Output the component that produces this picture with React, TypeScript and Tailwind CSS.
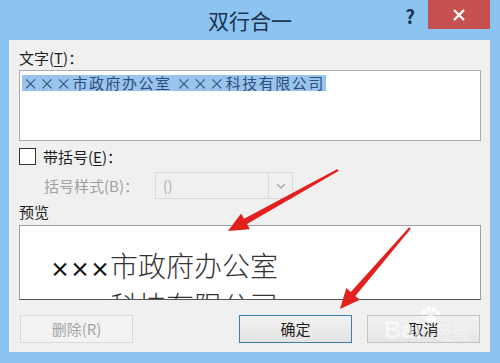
import React from 'react'

const ui = { fontFamily: '"Noto Sans CJK SC", "Liberation Sans", sans-serif' }

const Button = ({ label, kind }: { label: string; kind: 'disabled' | 'default' | 'normal' }) => {
  const cls =
    kind === 'disabled'
      ? 'border-[#d9d9d9] bg-[#f3f3f3] text-[#a3a3a3]'
      : kind === 'default'
        ? 'border-[#3c7fb1] bg-gradient-to-b from-[#f2f2f2] to-[#e3e3e3] text-[#1e1e1e]'
        : 'border-[#c4c4c4] bg-gradient-to-b from-[#f2f2f2] to-[#e6e6e6] text-[#1e1e1e]'
  return (
    <div className={`w-[113px] h-[28px] border flex items-center justify-center text-[15px] ${cls}`}>
      {label}
    </div>
  )
}

export default function App() {
  return (
    <div className="relative w-[500px] h-[363px] overflow-hidden bg-[#8cc3f1] flex flex-col" style={ui}>
      {/* title bar */}
      <div className="h-[40px] flex items-start shrink-0">
        <div className="pl-[208px] pt-[6px] text-[21px] leading-[28px] text-[#1b3450]">双行合一</div>
        <div className="ml-auto mt-[4px] mr-[13px] text-[19px] font-bold leading-[24px] text-[#1b3450]">?</div>
        <div className="w-[62px] h-[29px] mr-[10px] bg-[#c75050] flex items-center justify-center">
          <svg width="14" height="14" viewBox="0 0 14 14">
            <path d="M2 2 L12 12 M12 2 L2 12" stroke="#ffffff" strokeWidth="2.4" />
          </svg>
        </div>
      </div>

      {/* content panel */}
      <div className="ml-[9px] mr-[10px] h-[312px] bg-[#f0f0f0] pl-[10px] pr-[9px] flex flex-col text-[15px] text-[#1e1e1e]">
        <div className="pt-[9px] leading-[18px]">
          文字(<span className="underline underline-offset-2">T</span>)：
        </div>
        <div className="mt-[3px] h-[71px] border border-[#abadb3] bg-white pl-[2px] pt-[1px]">
          <span className="inline-block bg-[#99c4ec] text-[#2d4f7c] leading-[16px] px-[1px] tracking-[1.5px] whitespace-pre">
            ×××市政府办公室 ×××科技有限公司
          </span>
        </div>

        <div className="mt-[7px] h-[17px] flex items-center">
          <div className="w-[17px] h-[17px] border border-[#333333] bg-white" />
          <div className="ml-[7px] leading-[18px]">
            带括号(<span className="underline underline-offset-2">E</span>)：
          </div>
        </div>

        <div className="mt-[7px] h-[27px] flex items-center">
          <div className="ml-[25px] w-[111px] text-[#a0a0a0] leading-[18px]">括号样式(B)：</div>
          <div className="w-[138px] h-[27px] border border-[#d9d9d9] bg-[#f0f0f0] flex items-center">
            <div className="flex-1 pl-[7px] text-[#a8a8a8] text-[14px]">()</div>
            <div className="w-[24px] h-full border-l border-[#d9d9d9] flex items-center justify-center">
              <svg width="10" height="6" viewBox="0 0 10 6">
                <path d="M1 1 L5 5 L9 1" fill="none" stroke="#a8a8a8" strokeWidth="1.4" />
              </svg>
            </div>
          </div>
        </div>

        <div className="mt-[4px] leading-[18px]">预览</div>
        <div className="mt-[4px] h-[75px] border border-[#a0a0a0] border-b-[#555555] bg-white overflow-hidden pl-[30px] pt-[21px]">
          <div className="text-[28px] font-light leading-[36px] text-[#333333] whitespace-nowrap">
            <span className="text-[20px] font-bold text-[#111111]">×××</span>市政府办公室
          </div>
          <div className="text-[28px] font-light leading-[36px] text-[#333333] whitespace-nowrap">
            <span className="text-[20px] font-bold text-[#111111]">×××</span>科技有限公司
          </div>
        </div>

        <div className="mt-[15px] flex items-center">
          <div className="ml-[1px]">
            <Button label="删除(R)" kind="disabled" />
          </div>
          <div className="ml-auto mr-[1px] flex gap-[15px]">
            <Button label="确定" kind="default" />
            <Button label="取消" kind="normal" />
          </div>
        </div>
      </div>

      {/* watermark */}
      <div className="absolute left-[384px] top-[316px] flex items-end text-white/60 pointer-events-none">
        <span className="text-[24px] font-bold leading-[28px]" style={{ fontFamily: '"Liberation Sans", sans-serif' }}>
          Bai
        </span>
        <span className="ml-[14px] text-[17px] leading-[24px] text-white/50">经验</span>
      </div>
      <svg className="absolute left-[418px] top-[306px] pointer-events-none" width="24" height="20" viewBox="0 0 24 20">
        <g fill="#ffffff" opacity="0.8">
          <circle cx="6" cy="6" r="2.4" />
          <circle cx="11" cy="3" r="2.4" />
          <circle cx="16" cy="3.5" r="2.4" />
          <circle cx="20" cy="7" r="2.2" />
          <ellipse cx="13" cy="13" rx="5" ry="4" />
        </g>
      </svg>

      {/* red annotation arrows */}
      <svg className="absolute inset-0 pointer-events-none" width="500" height="363" viewBox="0 0 500 363">
        <polygon
          fill="#e2211f"
          points="338.5,170.9 247,223.9 249.9,229.2 228,231 241.1,213.4 244,218.7 337.5,169.1"
        />
        <polygon
          fill="#e2211f"
          points="410.8,228.7 355.4,295.9 359.9,299.8 340,309 346.3,288 350.8,291.9 409.2,227.3"
        />
      </svg>
    </div>
  )
}
